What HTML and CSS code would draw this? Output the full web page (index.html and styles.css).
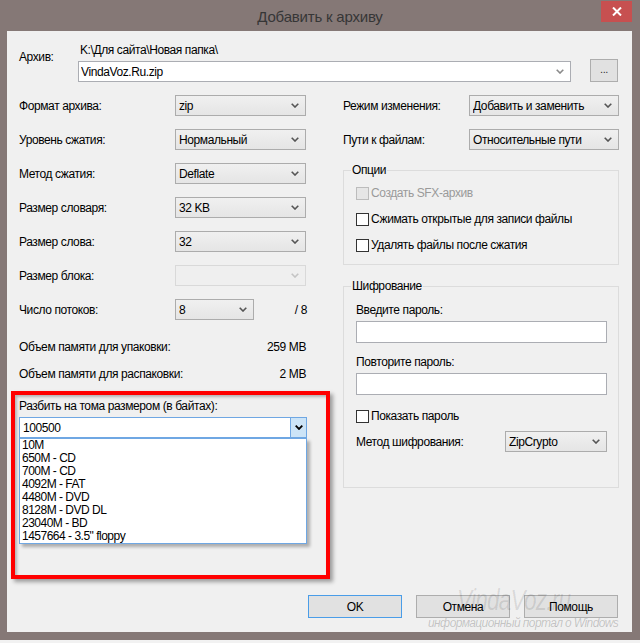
FILE: index.html
```html
<!DOCTYPE html>
<html lang="ru">
<head>
<meta charset="utf-8">
<title>Добавить к архиву</title>
<link rel="stylesheet" href="styles.css">
</head>
<body>
<div class="window">
  <div class="titlebar">
    <div class="title">Добавить к архиву</div>
    <div class="close"><svg width="10" height="9" viewBox="0 0 10 9"><path d="M1 0.5 L9 8.5 M9 0.5 L1 8.5" stroke="#fff" stroke-width="2" fill="none"/></svg></div>
  </div>
  <div class="client">
    <div class="archive">
      <div class="archive-label">Архив:</div>
      <div class="archive-path">K:\Для сайта\Новая папка\</div>
      <div class="combo combo-edit archive-name"><span class="combo-text">VindaVoz.Ru.zip</span><svg class="chev" width="8" height="5" viewBox="0 0 8 5"><path d="M0.7 0.7 L4 4 L7.3 0.7" stroke="#8a8a8a" stroke-width="1.6" fill="none"/></svg></div>
      <div class="btn btn-browse">...</div>
    </div>

    <div class="main">
      <div class="col-left">
        <div class="form-grid">
          <div class="lbl">Формат архива:</div>
          <div class="combo"><span class="combo-text">zip</span><svg class="chev" width="8" height="5" viewBox="0 0 8 5"><path d="M0.7 0.7 L4 4 L7.3 0.7" stroke="#555" stroke-width="1.6" fill="none"/></svg></div>
          <div class="lbl">Уровень сжатия:</div>
          <div class="combo"><span class="combo-text">Нормальный</span><svg class="chev" width="8" height="5" viewBox="0 0 8 5"><path d="M0.7 0.7 L4 4 L7.3 0.7" stroke="#555" stroke-width="1.6" fill="none"/></svg></div>
          <div class="lbl">Метод сжатия:</div>
          <div class="combo"><span class="combo-text">Deflate</span><svg class="chev" width="8" height="5" viewBox="0 0 8 5"><path d="M0.7 0.7 L4 4 L7.3 0.7" stroke="#555" stroke-width="1.6" fill="none"/></svg></div>
          <div class="lbl">Размер словаря:</div>
          <div class="combo"><span class="combo-text">32 KB</span><svg class="chev" width="8" height="5" viewBox="0 0 8 5"><path d="M0.7 0.7 L4 4 L7.3 0.7" stroke="#555" stroke-width="1.6" fill="none"/></svg></div>
          <div class="lbl">Размер слова:</div>
          <div class="combo"><span class="combo-text">32</span><svg class="chev" width="8" height="5" viewBox="0 0 8 5"><path d="M0.7 0.7 L4 4 L7.3 0.7" stroke="#555" stroke-width="1.6" fill="none"/></svg></div>
          <div class="lbl">Размер блока:</div>
          <div class="combo combo-disabled"><span class="combo-text"></span><svg class="chev" width="8" height="5" viewBox="0 0 8 5"><path d="M0.7 0.7 L4 4 L7.3 0.7" stroke="#c4c4c4" stroke-width="1.6" fill="none"/></svg></div>
          <div class="lbl">Число потоков:</div>
          <div class="threads">
            <div class="combo combo-short"><span class="combo-text">8</span><svg class="chev" width="8" height="5" viewBox="0 0 8 5"><path d="M0.7 0.7 L4 4 L7.3 0.7" stroke="#555" stroke-width="1.6" fill="none"/></svg></div>
            <span class="threads-max">/ 8</span>
          </div>
        </div>

        <div class="memory">
          <div class="mem-row"><span>Объем памяти для упаковки:</span><span>259 MB</span></div>
          <div class="mem-row"><span>Объем памяти для распаковки:</span><span>2 MB</span></div>
        </div>

        <div class="split">
          <div class="split-label">Разбить на тома размером (в байтах):</div>
          <div class="combo combo-focus"><span class="combo-text">100500</span><span class="drop-btn"><svg width="8" height="5" viewBox="0 0 8 5"><path d="M0.7 0.7 L4 4 L7.3 0.7" stroke="#000" stroke-width="1.8" fill="none"/></svg></span></div>
          <ul class="droplist">
            <li>10M</li>
            <li>650M - CD</li>
            <li>700M - CD</li>
            <li>4092M - FAT</li>
            <li>4480M - DVD</li>
            <li>8128M - DVD DL</li>
            <li>23040M - BD</li>
            <li>1457664 - 3.5" floppy</li>
          </ul>
          <div class="highlight"></div>
        </div>
      </div>

      <div class="col-right">
        <div class="rgrid">
          <div class="lbl">Режим изменения:</div>
          <div class="combo"><span class="combo-text">Добавить и заменить</span><svg class="chev" width="8" height="5" viewBox="0 0 8 5"><path d="M0.7 0.7 L4 4 L7.3 0.7" stroke="#555" stroke-width="1.6" fill="none"/></svg></div>
          <div class="lbl">Пути к файлам:</div>
          <div class="combo"><span class="combo-text">Относительные пути</span><svg class="chev" width="8" height="5" viewBox="0 0 8 5"><path d="M0.7 0.7 L4 4 L7.3 0.7" stroke="#555" stroke-width="1.6" fill="none"/></svg></div>
        </div>

        <fieldset class="group group-options">
          <legend>Опции</legend>
          <div class="checks">
            <div class="check-row disabled"><span class="check"></span><span>Создать SFX-архив</span></div>
            <div class="check-row"><span class="check"></span><span>Сжимать открытые для записи файлы</span></div>
            <div class="check-row"><span class="check"></span><span>Удалять файлы после сжатия</span></div>
          </div>
        </fieldset>

        <fieldset class="group group-crypt">
          <legend>Шифрование</legend>
          <div class="field-label">Введите пароль:</div>
          <div class="textbox"></div>
          <div class="field-label second">Повторите пароль:</div>
          <div class="textbox"></div>
          <div class="check-row show-pass"><span class="check"></span><span>Показать пароль</span></div>
          <div class="method-row">
            <span>Метод шифрования:</span>
            <div class="combo combo-method"><span class="combo-text">ZipCrypto</span><svg class="chev" width="8" height="5" viewBox="0 0 8 5"><path d="M0.7 0.7 L4 4 L7.3 0.7" stroke="#555" stroke-width="1.6" fill="none"/></svg></div>
          </div>
        </fieldset>
      </div>
    </div>

    <div class="buttons">
      <div class="btn btn-dlg btn-default">OK</div>
      <div class="btn btn-dlg">Отмена</div>
      <div class="btn btn-dlg">Помощь</div>
    </div>
  </div>

  <div class="watermark">
    <div class="wm-big">VindaVoz.ru</div>
    <div class="wm-small">информационный портал о Windows</div>
  </div>
</div>
</body>
</html>
```

FILE: styles.css
```css
* { box-sizing: border-box; }

body {
  margin: 0;
  background: #f2f2f2;
  font: 12px/14px "Liberation Sans", Arial, sans-serif;
  letter-spacing: -0.4px;
  color: #000;
}

.window {
  position: relative;
  width: 640px;
  height: 640px;
  background: #857876;
  display: flex;
  flex-direction: column;
  padding: 0 8px 8px 7px;
}

.titlebar {
  height: 31px;
  flex-shrink: 0;
  display: flex;
  align-items: flex-start;
}

.title {
  flex: 1;
  text-align: center;
  padding-left: 32px;
  padding-top: 8px;
  font-size: 15px;
  line-height: 18px;
  letter-spacing: -0.2px;
  color: #363636;
}

.close {
  width: 31px;
  height: 21px;
  margin-top: 1px;
  background: #c75050;
  display: flex;
  align-items: center;
  justify-content: center;
}

.client {
  flex: 1;
  background: #f0f0f0;
  display: flex;
  flex-direction: column;
  padding: 12px 13px 14px 12px;
}

/* archive row */
.archive {
  display: grid;
  grid-template-columns: 59px 493px 19px 28px;
  grid-template-rows: auto auto;
  row-gap: 2px;
}
.archive-label { grid-column: 1; grid-row: 1 / 3; align-self: start; margin-top: 7px; }
.archive-path { grid-column: 2; grid-row: 1; padding-left: 2px; }
.archive-name { grid-column: 2; grid-row: 2; align-self: end; }
.btn-browse { grid-column: 4; grid-row: 2; height: 23px; align-items: flex-end; padding-bottom: 4px; font-size: 11px; color: #333; }

/* combos */
.combo {
  display: flex;
  align-items: center;
  height: 21px;
  border: 1px solid #acacac;
  background: linear-gradient(#f0f0f0, #e5e5e5);
  padding: 0 6px 0 3px;
  white-space: nowrap;
}
.combo-text { flex: 1; overflow: hidden; }
.chev { flex-shrink: 0; }
.combo-edit { background: #fff; border-color: #abadb3; padding-left: 2px; }
.combo-disabled { background: #efefef; border-color: #d9d9d9; }
.combo-short { width: 79px; }
.combo-focus {
  background: #fff;
  border-color: #6fa7e3;
  padding: 0 0 0 3px;
}
.drop-btn {
  width: 16px;
  height: 100%;
  background: #cce4f7;
  border-left: 1px solid #6fa7e3;
  display: flex;
  align-items: center;
  justify-content: center;
}

/* main */
.main {
  display: grid;
  grid-template-columns: 288px 276px;
  column-gap: 36px;
  margin-top: 13px;
}

.form-grid {
  display: grid;
  grid-template-columns: 156px 131px;
  row-gap: 13px;
  align-items: center;
}

.threads {
  display: flex;
  justify-content: space-between;
  align-items: center;
  margin-right: -1px;
}

.memory {
  margin-top: 20px;
  display: flex;
  flex-direction: column;
  gap: 13px;
  padding-right: 1px;
}
.mem-row { display: flex; justify-content: space-between; }

.split { position: relative; margin-top: 18px; }
.split .combo { margin-top: 4px; }

.droplist {
  position: absolute;
  left: 0;
  top: 39px;
  width: 288px;
  margin: 0;
  padding: 0;
  list-style: none;
  background: #fff;
  border: 1px solid #6fa7e3;
  box-shadow: 3px 3px 3px rgba(0, 0, 0, 0.28);
}
.droplist li { height: 13px; line-height: 13px; padding-left: 2px; letter-spacing: -0.5px; }

.highlight {
  position: absolute;
  left: -8px;
  top: -8px;
  width: 319px;
  height: 188px;
  border: 4px solid #ff0000;
  box-shadow: 3px 3px 4px rgba(0, 0, 0, 0.35), inset 2px 2px 3px rgba(0, 0, 0, 0.25);
  pointer-events: none;
}

/* right column */
.rgrid {
  display: grid;
  grid-template-columns: 126px 150px;
  row-gap: 13px;
  align-items: center;
}

.group {
  margin: 13px 0 0;
  border: 1px solid #dcdcdc;
  min-width: 0;
}
.group legend {
  padding: 0 1px;
  margin-left: -5px;
  line-height: 14px;
}
.group-options { padding: 9px 11px 12px 12px; }
.group-crypt { margin-top: 14px; padding: 10px 11px 35px 12px; }

.checks { display: flex; flex-direction: column; gap: 12px; }
.check-row { display: flex; align-items: center; height: 14px; }
.check {
  width: 13px;
  height: 13px;
  border: 1px solid #333;
  background: #fff;
  margin-right: 2px;
  flex-shrink: 0;
}
.check-row.disabled { color: #9a9a9a; }
.check-row.disabled .check { background: #e6e6e6; border-color: #bcbcbc; }

.field-label.second { margin-top: 12px; }
.textbox {
  margin-top: 4px;
  height: 22px;
  border: 1px solid #abadb3;
  background: #fff;
}
.show-pass { margin-top: 14px; }
.method-row {
  margin-top: 8px;
  display: flex;
  justify-content: space-between;
  align-items: center;
}
.combo-method { width: 102px; }

/* buttons */
.btn {
  display: flex;
  align-items: center;
  justify-content: center;
  border: 1px solid #adadad;
  background: #e1e1e1;
}
.buttons {
  margin-top: auto;
  display: flex;
  justify-content: flex-end;
  gap: 14px;
  padding-right: 1px;
}
.btn-dlg { width: 94px; height: 23px; }
.btn-default { border-color: #4a9de8; }

/* watermark overlay */
.watermark {
  position: absolute;
  left: 428px;
  top: 583px;
  pointer-events: none;
  font-style: italic;
}
.wm-big {
  margin-left: 29px;
  font-size: 29px;
  line-height: 34px;
  letter-spacing: -1px;
  color: rgba(0, 0, 0, 0.1);
  transform: scaleX(0.78);
  transform-origin: left center;
}
.wm-small {
  margin-top: -1px;
  font-size: 12px;
  line-height: 14px;
  letter-spacing: -0.6px;
  white-space: nowrap;
  color: rgba(0, 0, 0, 0.2);
}
```
